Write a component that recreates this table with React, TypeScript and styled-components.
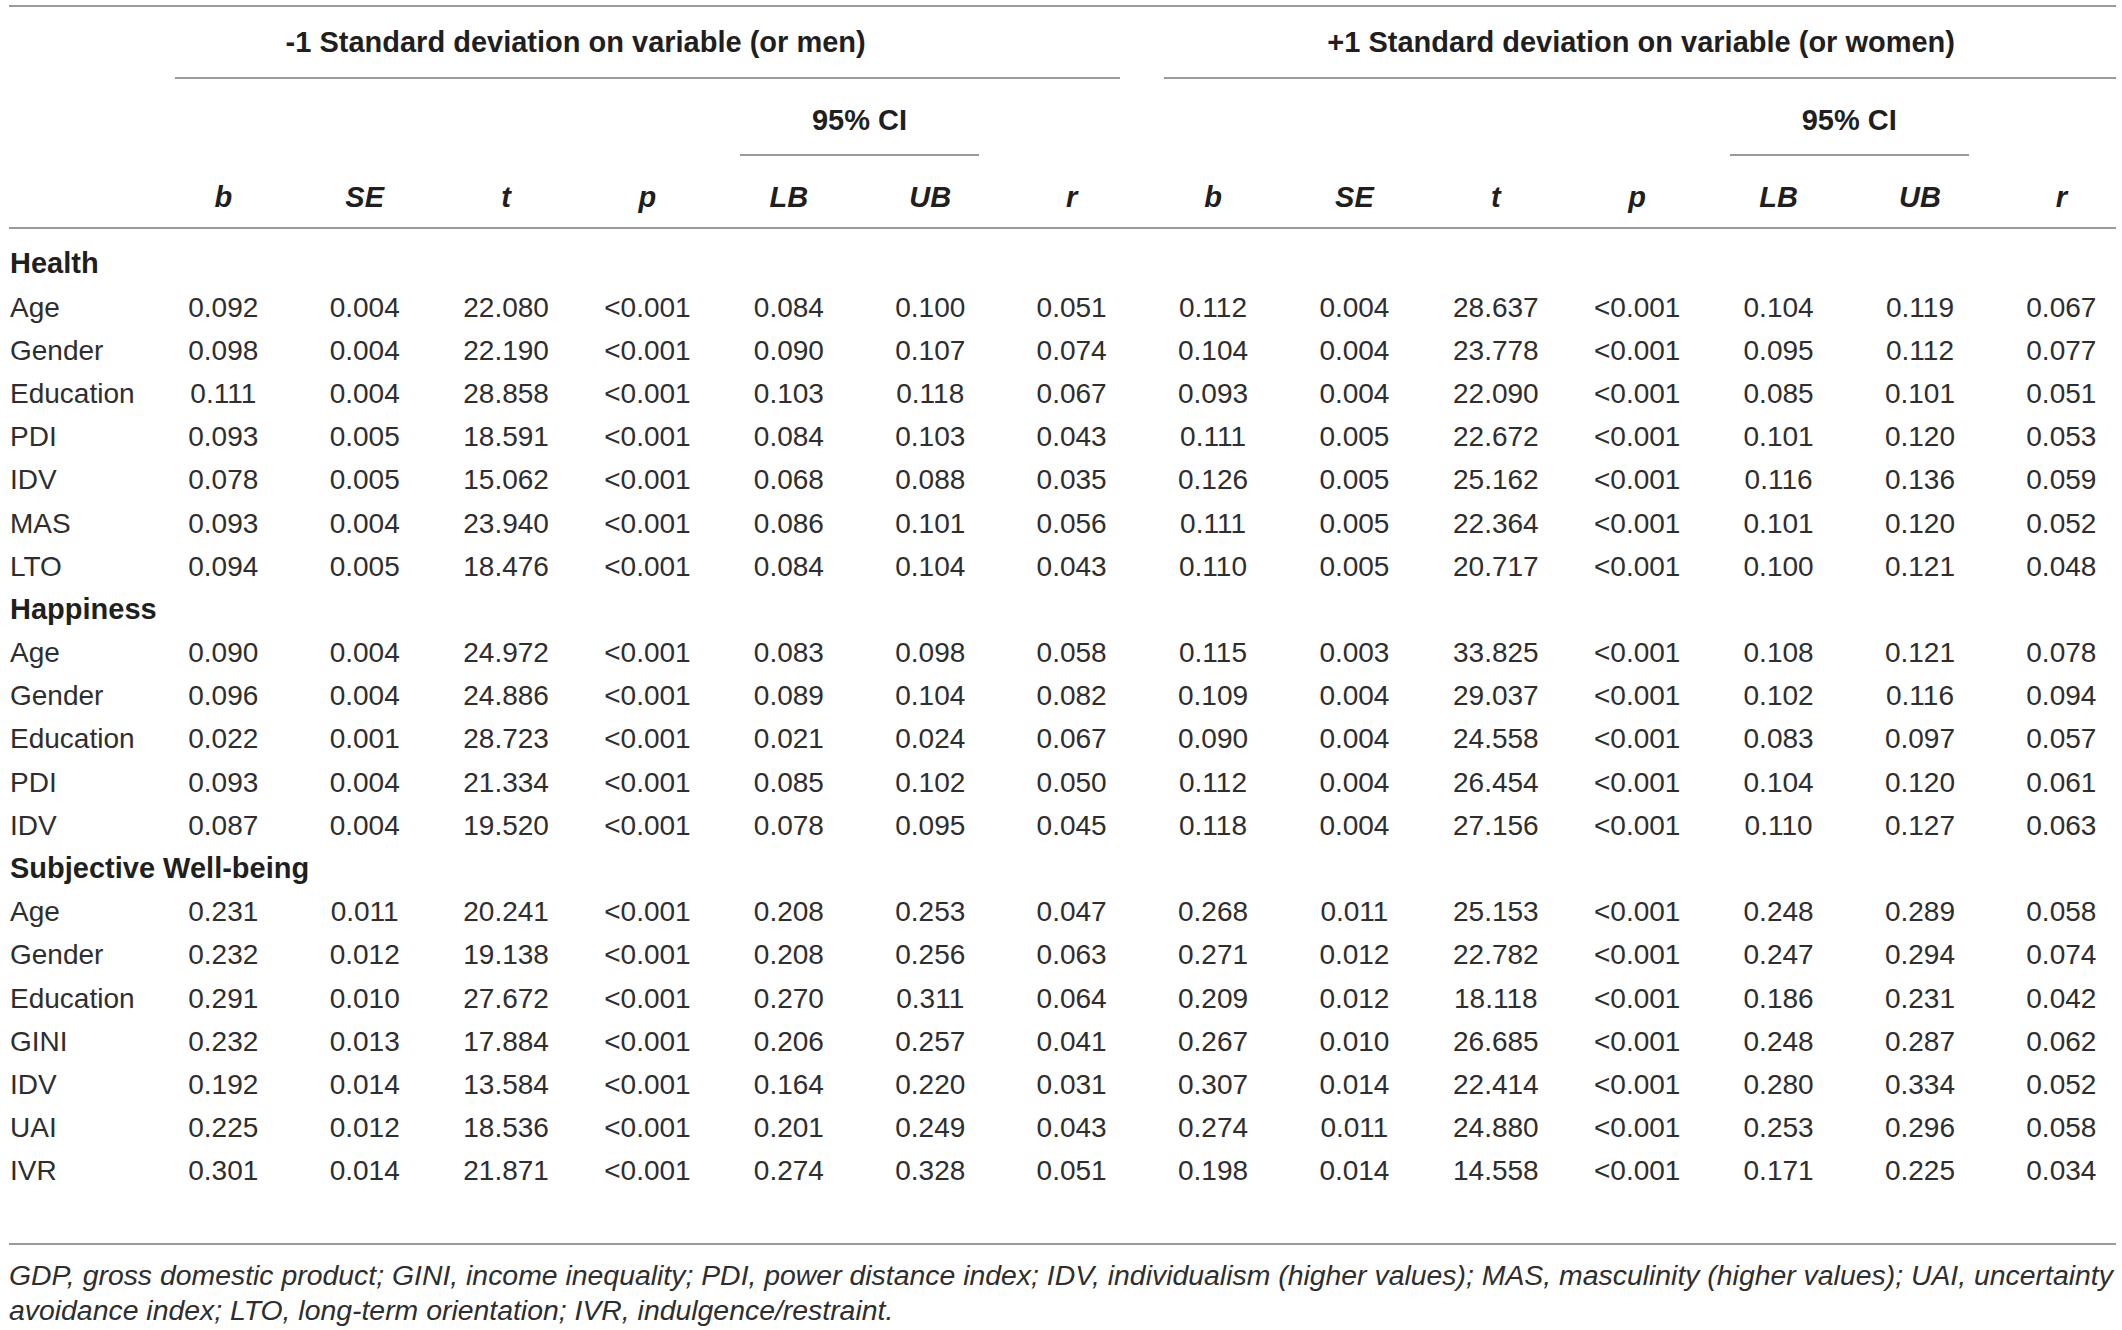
import React from "react";
import styled, { createGlobalStyle } from "styled-components";

const GlobalStyle = createGlobalStyle`
  html, body {
    margin: 0;
    padding: 0;
    background: #ffffff;
    overflow: hidden;
  }
  body {
    font-family: "Liberation Sans", Arial, Helvetica, sans-serif;
    color: #2e2e2e;
  }
`;

const RULE = "#9a9a9a";

const Page = styled.div`
  padding: 5px 0 0 9px;
`;

const Table = styled.div`
  width: 2107px;
  border-top: 2px solid ${RULE};
`;

const Grid = styled.div`
  display: grid;
  grid-template-columns: 143.6px repeat(13, 141.4px) 1fr;
`;

const Head = styled(Grid)`
  grid-template-rows: auto auto auto;
  border-bottom: 2px solid ${RULE};
`;

const Body = styled(Grid)`
  grid-auto-rows: 43.2px;
  padding: 13.4px 0 50px;
  border-bottom: 2px solid ${RULE};
`;

const GroupTitle = styled.div<{ $col: number; $span: number; $indent?: number }>`
  grid-row: 1;
  grid-column: ${(p) => p.$col} / span ${(p) => p.$span};
  padding: 18px 0 20px ${(p) => p.$indent ?? 0}px;
  font-size: 29px;
  font-weight: 700;
  line-height: 34px;
  text-align: center;
  color: #1f1f1f;
`;

const GroupRule = styled.div<{ $col: number; $flush?: boolean }>`
  grid-row: 1;
  grid-column: ${(p) => p.$col} / span 7;
  align-self: end;
  height: 2px;
  margin: 0 ${(p) => (p.$flush ? 0 : 22)}px 0 22px;
  background: ${RULE};
`;

const CITitle = styled.div<{ $col: number }>`
  grid-row: 2;
  grid-column: ${(p) => p.$col} / span 2;
  margin: 0 22px;
  padding: 24px 0 17px;
  border-bottom: 2px solid ${RULE};
  font-size: 29px;
  font-weight: 700;
  line-height: 34px;
  text-align: center;
  color: #1f1f1f;
`;

const ColHead = styled.div<{ $col: number; $last?: boolean }>`
  grid-row: 3;
  grid-column: ${(p) => p.$col};
  padding: 24px 0 13px ${(p) => (p.$last ? 16 : 0)}px;
  font-size: 29px;
  font-weight: 700;
  font-style: italic;
  line-height: 34px;
  text-align: center;
  color: #1f1f1f;
`;

const SectionLabel = styled.div`
  grid-column: 1 / -1;
  padding-left: 1px;
  font-size: 29px;
  font-weight: 700;
  line-height: 43.2px;
  color: #1f1f1f;
`;

const RowLabel = styled.div`
  grid-column: 1;
  padding-left: 1px;
  font-size: 28px;
  line-height: 43.2px;
  white-space: nowrap;
`;

const Cell = styled.div<{ $last?: boolean }>`
  padding-left: ${(p) => (p.$last ? 16 : 0)}px;
  font-size: 28px;
  line-height: 43.2px;
  text-align: center;
  white-space: nowrap;
`;

const Footnote = styled.p`
  margin: 0;
  padding-top: 13.5px;
  width: 2107px;
  font-size: 28.4px;
  font-style: italic;
  line-height: 35px;
  color: #2e2e2e;
`;

type Row = [string, string[]];
type Section = { title: string; rows: Row[] };

const r = (label: string, values: string): Row => [label, values.split(" ")];

const sections: Section[] = [
  {
    title: "Health",
    rows: [
      r("Age", "0.092 0.004 22.080 <0.001 0.084 0.100 0.051 0.112 0.004 28.637 <0.001 0.104 0.119 0.067"),
      r("Gender", "0.098 0.004 22.190 <0.001 0.090 0.107 0.074 0.104 0.004 23.778 <0.001 0.095 0.112 0.077"),
      r("Education", "0.111 0.004 28.858 <0.001 0.103 0.118 0.067 0.093 0.004 22.090 <0.001 0.085 0.101 0.051"),
      r("PDI", "0.093 0.005 18.591 <0.001 0.084 0.103 0.043 0.111 0.005 22.672 <0.001 0.101 0.120 0.053"),
      r("IDV", "0.078 0.005 15.062 <0.001 0.068 0.088 0.035 0.126 0.005 25.162 <0.001 0.116 0.136 0.059"),
      r("MAS", "0.093 0.004 23.940 <0.001 0.086 0.101 0.056 0.111 0.005 22.364 <0.001 0.101 0.120 0.052"),
      r("LTO", "0.094 0.005 18.476 <0.001 0.084 0.104 0.043 0.110 0.005 20.717 <0.001 0.100 0.121 0.048"),
    ],
  },
  {
    title: "Happiness",
    rows: [
      r("Age", "0.090 0.004 24.972 <0.001 0.083 0.098 0.058 0.115 0.003 33.825 <0.001 0.108 0.121 0.078"),
      r("Gender", "0.096 0.004 24.886 <0.001 0.089 0.104 0.082 0.109 0.004 29.037 <0.001 0.102 0.116 0.094"),
      r("Education", "0.022 0.001 28.723 <0.001 0.021 0.024 0.067 0.090 0.004 24.558 <0.001 0.083 0.097 0.057"),
      r("PDI", "0.093 0.004 21.334 <0.001 0.085 0.102 0.050 0.112 0.004 26.454 <0.001 0.104 0.120 0.061"),
      r("IDV", "0.087 0.004 19.520 <0.001 0.078 0.095 0.045 0.118 0.004 27.156 <0.001 0.110 0.127 0.063"),
    ],
  },
  {
    title: "Subjective Well-being",
    rows: [
      r("Age", "0.231 0.011 20.241 <0.001 0.208 0.253 0.047 0.268 0.011 25.153 <0.001 0.248 0.289 0.058"),
      r("Gender", "0.232 0.012 19.138 <0.001 0.208 0.256 0.063 0.271 0.012 22.782 <0.001 0.247 0.294 0.074"),
      r("Education", "0.291 0.010 27.672 <0.001 0.270 0.311 0.064 0.209 0.012 18.118 <0.001 0.186 0.231 0.042"),
      r("GINI", "0.232 0.013 17.884 <0.001 0.206 0.257 0.041 0.267 0.010 26.685 <0.001 0.248 0.287 0.062"),
      r("IDV", "0.192 0.014 13.584 <0.001 0.164 0.220 0.031 0.307 0.014 22.414 <0.001 0.280 0.334 0.052"),
      r("UAI", "0.225 0.012 18.536 <0.001 0.201 0.249 0.043 0.274 0.011 24.880 <0.001 0.253 0.296 0.058"),
      r("IVR", "0.301 0.014 21.871 <0.001 0.274 0.328 0.051 0.198 0.014 14.558 <0.001 0.171 0.225 0.034"),
    ],
  },
];

const colNames = ["b", "SE", "t", "p", "LB", "UB", "r"];
const allCols = [...colNames, ...colNames];

export default function App() {
  return (
    <>
      <GlobalStyle />
      <Page>
        <Table>
          <Head>
            <GroupTitle $col={1} $span={8}>
              -1 Standard deviation on variable (or men)
            </GroupTitle>
            <GroupRule $col={2} />
            <GroupTitle $col={9} $span={7} $indent={24}>
              +1 Standard deviation on variable (or women)
            </GroupTitle>
            <GroupRule $col={9} $flush />
            <CITitle $col={6}>95% CI</CITitle>
            <CITitle $col={13}>95% CI</CITitle>
            {allCols.map((name, i) => (
              <ColHead key={i} $col={i + 2} $last={i === allCols.length - 1}>
                {name}
              </ColHead>
            ))}
          </Head>
          <Body>
            {sections.map((section) => (
              <React.Fragment key={section.title}>
                <SectionLabel>{section.title}</SectionLabel>
                {section.rows.map(([label, values], ri) => (
                  <React.Fragment key={section.title + ri}>
                    <RowLabel>{label}</RowLabel>
                    {values.map((v, ci) => (
                      <Cell key={ci} $last={ci === values.length - 1}>
                        {v}
                      </Cell>
                    ))}
                  </React.Fragment>
                ))}
              </React.Fragment>
            ))}
          </Body>
        </Table>
        <Footnote>
          GDP, gross domestic product; GINI, income inequality; PDI, power distance index; IDV,
          individualism (higher values); MAS, masculinity (higher values); UAI, uncertainty
          avoidance index; LTO, long-term orientation; IVR, indulgence/restraint.
        </Footnote>
      </Page>
    </>
  );
}
